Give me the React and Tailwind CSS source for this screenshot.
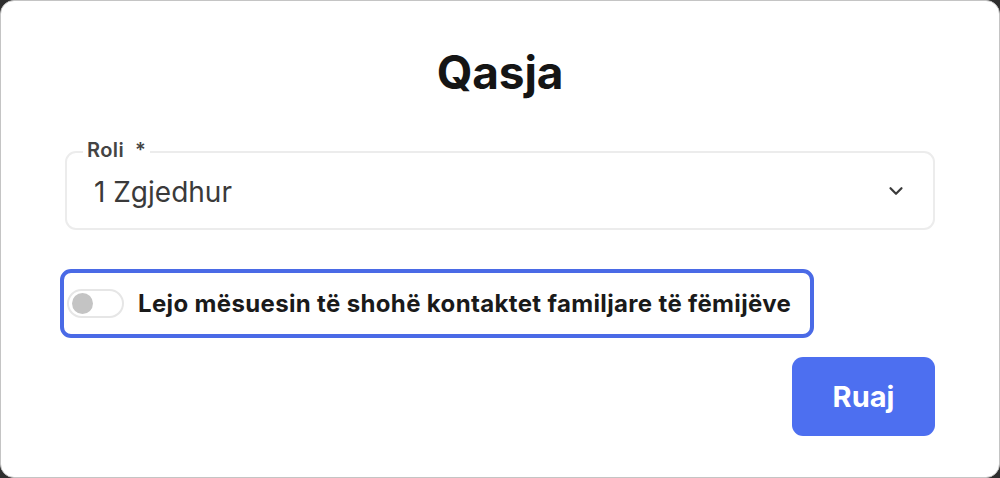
import React from "react";

export default function App() {
  return (
    <div className="w-[1000px] h-[478px] bg-[#2e2e2e]" style={{ fontFamily: "Inter, 'Noto Sans', sans-serif" }}>
      <div className="w-full h-full bg-white rounded-[14px] border border-[#c4c4c4] flex flex-col px-[64px]">
        <h1 className="text-[46px] font-bold text-[#151515] text-center mt-[42px] leading-[58px] tracking-[-0.2px]">Qasja</h1>
        <div className="relative mt-[50px] h-[79px] rounded-[11px] border-2 border-[#ececec] flex items-center pl-[27px] pr-[26px]">
          <span className="absolute left-[16px] top-[-15px] bg-white px-[4px] text-[20px] font-semibold text-[#444] leading-[24px] tracking-[0.4px] whitespace-pre">Roli  *</span>
          <span className="flex-1 text-[28px] text-[#3a3a3a] mt-[2px]">1 Zgjedhur</span>
          <svg width="22" height="22" viewBox="0 0 24 24" fill="none" stroke="#3a3a3a" strokeWidth="2.4" strokeLinecap="round" strokeLinejoin="round">
            <path d="M6 9l6 6 6-6" />
          </svg>
        </div>
        <div className="mt-[39px] ml-[-5px] w-[754px] h-[69px] rounded-[11px] border-[4px] border-[#4a6ae6] flex items-center pl-[3px]">
          <div className="w-[57px] h-[29px] rounded-full border-2 border-[#e6e6e6] flex items-center pl-[3px]">
            <div className="w-[21px] h-[21px] rounded-full bg-[#c4c4c4]" />
          </div>
          <span className="ml-[14px] text-[24px] font-bold text-[#1a1a1a] tracking-[0.35px]">Lejo mësuesin të shohë kontaktet familjare të fëmijëve</span>
        </div>
        <div className="flex justify-end mt-[19px]">
          <button className="w-[143px] h-[79px] rounded-[11px] bg-[#4d6ff0] text-white text-[29px] font-bold">Ruaj</button>
        </div>
      </div>
    </div>
  );
}
